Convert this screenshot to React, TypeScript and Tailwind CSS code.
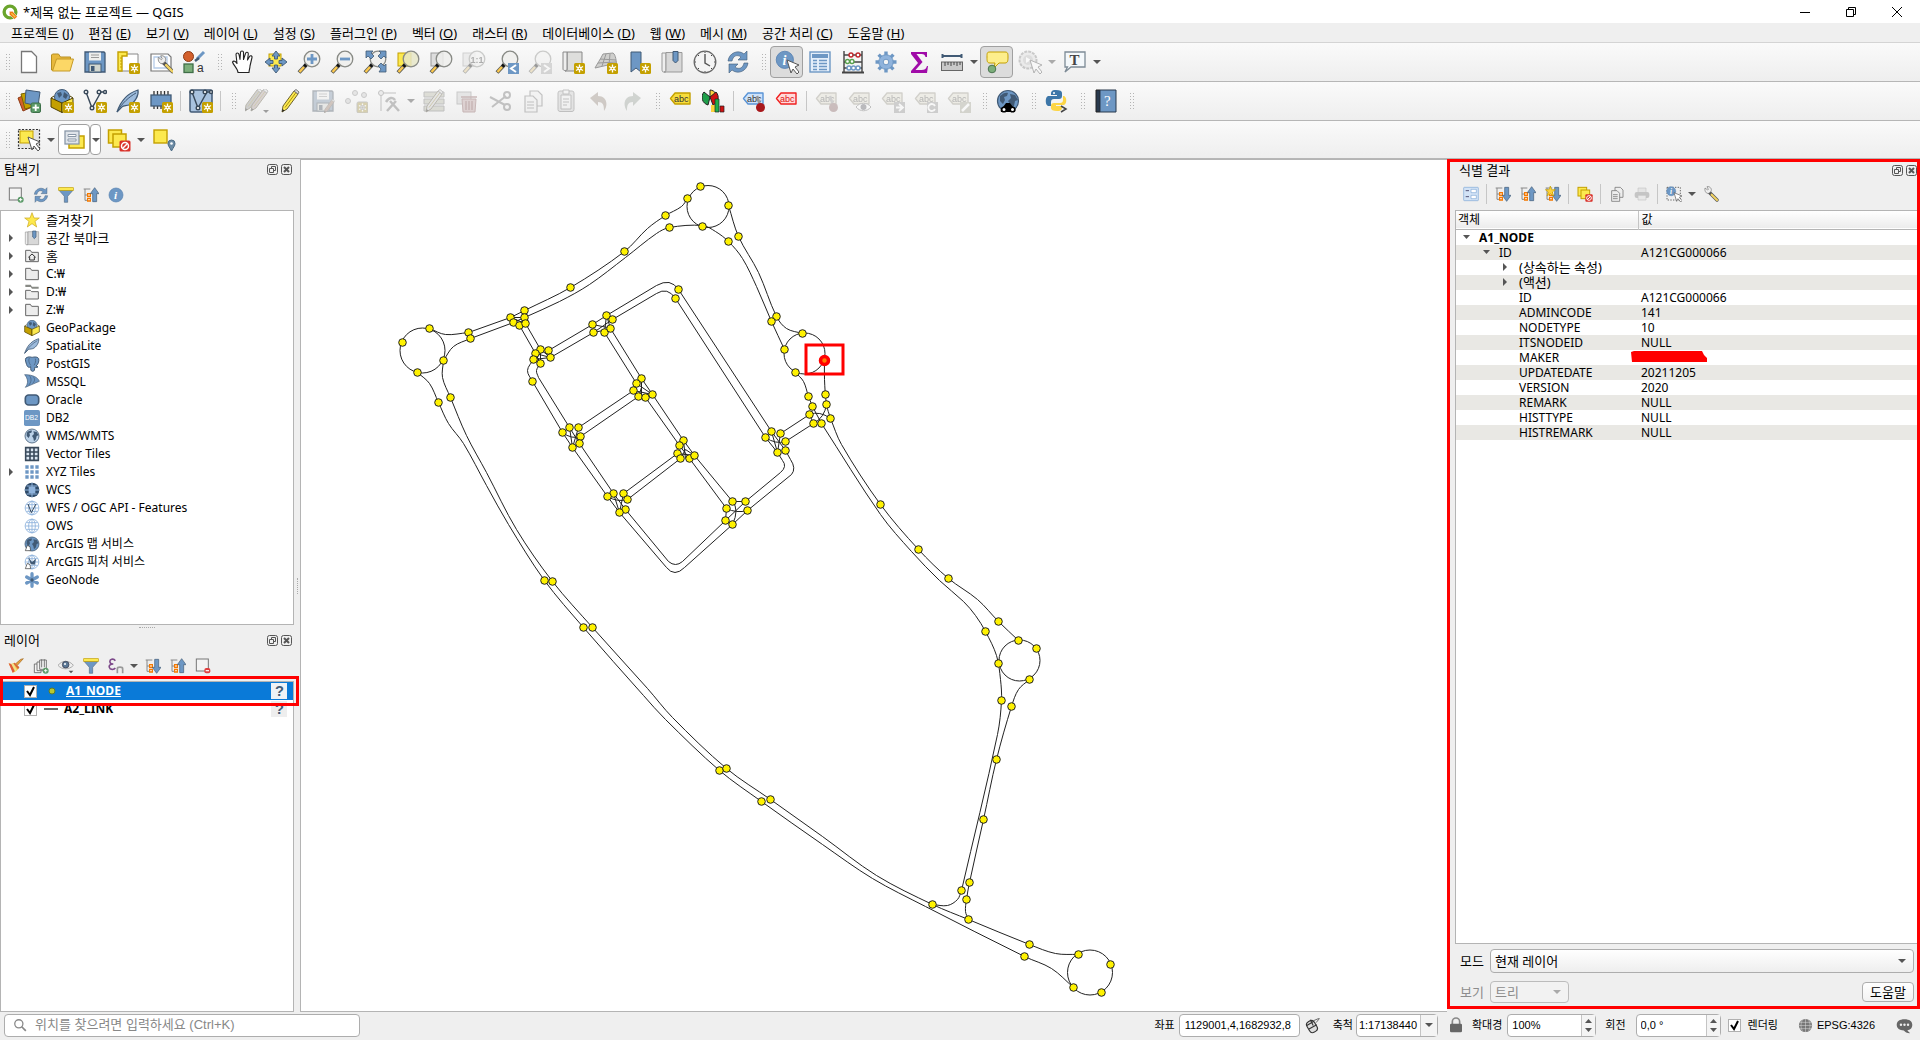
import React, { type ReactNode } from "react";

const BLUE = "#6d97c4";
const DARK = "#415a75";
const YEL = "#fce94f";
const GOLD = "#c4a000";

/* ---------- shared icon parts ---------- */

const Badge = () => (
  <g>
    <rect x="13" y="13" width="11" height="11" rx="1.5" fill={GOLD} />
    <path d="M18.5 14.5v8M15 16.5l7 4M22 16.5l-7 4" stroke="#fff" strokeWidth="1.3" />
    <circle cx="18.5" cy="18.5" r="2" fill="#fff" />
    <circle cx="18.5" cy="18.5" r=".8" fill={GOLD} />
  </g>
);

const Lens = ({ children, fill = "#eeeeec" }: { children?: ReactNode; fill?: string }) => (
  <g>
    <path d="M9.5 14.5L2 22.5" stroke="#555753" strokeWidth="4" />
    <path d="M7 17L2.5 22" stroke="#fcc94f" strokeWidth="2.4" />
    <path d="M10 13.5l-2.5 3" stroke="#111" strokeWidth="3.5" />
    <circle cx="15" cy="9" r="7.8" fill={fill} fillOpacity=".85" stroke="#888a85" strokeWidth="1.3" />
    {children}
  </g>
);

const Globe = ({ dark = false }: { dark?: boolean }) => (
  <g>
    <circle cx="12" cy="12" r="10.5" fill={dark ? BLUE : "#bcd2e8"} stroke={DARK} strokeWidth="1.2" />
    <path d="M4 7c3-3 6-4 8-3l-1 3-3 1 1 3-2 4-3-3zM14 5l5 1 3 5-3 1-1 5-3 3-1-5-2-3 3-3z" fill={DARK} />
  </g>
);

const Grid = ({ fill, stroke }: { fill: string; stroke: string }) => (
  <g fill="none" stroke={stroke} strokeWidth="1.3">
    <circle cx="12" cy="12" r="10.3" fill={fill} />
    <ellipse cx="12" cy="12" rx="5" ry="10.3" />
    <path d="M12 2v20M2 12h20M3.500 7h17M3.500 17h17" />
  </g>
);

const Tag = ({ fill = "#e6dfc0", stroke = "#a09a80", color = "#555" }: { fill?: string; stroke?: string; color?: string }) => (
  <g>
    <path d="M1.500 9.500L6 4h15v11H6z" fill={fill} stroke={stroke} strokeWidth="1.4" strokeLinejoin="round" />
    <text x="5" y="12.500" fontSize="9" fontFamily="Liberation Sans" fill={color}>abc</text>
  </g>
);

const Doc = () => <path d="M4.500 1.500h10l5 5v16h-15z" fill="#fff" stroke="#777" strokeWidth="1.3" />;

const Box = () => (
  <g>
    <circle cx="12" cy="8" r="7.500" fill={BLUE} stroke={DARK} />
    <path d="M7 4l4-1 1 3-3 3zM14 3l4 3-2 4-3-2z" fill={DARK} />
    <path d="M1 9l11 5v9.500L1 18z" fill={GOLD} stroke="#4d3f00" strokeLinejoin="round" />
    <path d="M23 9l-11 5v9.500L23 18z" fill={YEL} stroke="#4d3f00" strokeLinejoin="round" />
    <path d="M1 9l3-2M23 9l-3-2" stroke="#4d3f00" />
  </g>
);

const Feather = () => (
  <g>
    <path d="M1 23C4 14 9 5 22 1c1 5-3 13-9 15-3 1-6 0-7 2z" fill="#9dbbdc" stroke={DARK} strokeWidth="1.2" />
    <path d="M1 23C6 14 13 8 20 4" stroke={DARK} fill="none" />
  </g>
);

const Pointer = ({ x = 10, y = 9 }: { x?: number; y?: number }) => (
  <path transform={`translate(${x} ${y})`} d="M1 1l12 5-4 2 4 5-2 2-4-5-2 4z" fill="#fff" stroke="#555" strokeLinejoin="round" />
);

const Refresh = () => (
  <g fill={BLUE} stroke={DARK} strokeWidth=".6">
    <path d="M2 11C3 3 12-1 18 4l3-3v9h-9l3-3c-4-3-8-1-9 4z" />
    <path d="M22 13c-1 8-10 12-16 7l-3 3v-9h9l-3 3c4 3 8 1 9-4z" />
  </g>
);

const NoSign = ({ cx = 18, cy = 18 }: { cx?: number; cy?: number }) => (
  <g>
    <rect x={cx - 5.5} y={cy - 5.5} width="11" height="11" rx="1.500" fill="#d9322b" />
    <circle cx={cx} cy={cy} r="3.500" fill="none" stroke="#fff" strokeWidth="1.500" />
    <path d={`M${cx - 2.5} ${cy + 2.5}l5-5`} stroke="#fff" strokeWidth="1.500" />
  </g>
);

const Wrench = () => (
  <g>
    <path d="M9 9l12 12" stroke="#555" strokeWidth="5" strokeLinecap="round" />
    <path d="M13 13l8 8" stroke="#f0d264" strokeWidth="3.200" strokeLinecap="round" />
    <path d="M3 3l4 3 1-1-2-4c4-1 8 3 6 7l-3 3C5 12 2 8 3 3z" fill="#eee" stroke="#777" />
  </g>
);

const Pencil = ({ fill = YEL }: { fill?: string }) => (
  <g>
    <path d="M5 17L16 2l4 3L9 20l-5 3z" fill={fill} stroke="#6b6030" strokeLinejoin="round" />
    <path d="M7 18.500L18 3.500" stroke="#a89010" />
    <path d="M16 2l4 3 1-2-3-2.500z" fill="#ddd" stroke="#777" />
    <path d="M4 23l.5-3 2 1.500z" fill="#222" />
  </g>
);

const Floppy = () => (
  <g>
    <path d="M2 2h19l1 1v19H2z" fill={BLUE} stroke={DARK} strokeWidth="1.300" />
    <rect x="6" y="2.500" width="12" height="8" fill="#eeeeec" />
    <path d="M8 5h8M8 7.500h8" stroke="#999" />
    <rect x="6" y="14" width="12" height="8" fill="#d3d7cf" stroke={DARK} />
    <rect x="8" y="16" width="3.500" height="5" fill={DARK} />
  </g>
);

const Funnel = () => (
  <g>
    <path d="M1.500 5h21l-8 9v9h-5v-9z" fill={BLUE} stroke={DARK} strokeWidth=".8" />
    <rect x="1" y="1" width="22" height="4" fill={YEL} stroke={GOLD} />
  </g>
);

const Tree = ({ up = false }: { up?: boolean }) => (
  <g>
    <path d="M1 3h10M3 3v17h5M3 12h5" stroke="#888" fill="none" strokeWidth="1.500" />
    <path d="M7 10h4v4H7zM7 17h4v4H7z" fill="#fff" stroke="#f57900" strokeWidth="2" />
    {up ? (
      <path d="M14.500 22V10H11l6.500-9L24 10h-3.500v12z" fill={BLUE} stroke={DARK} />
    ) : (
      <path d="M14.500 2v12H11l6.500 9 6.500-9h-3.500V2z" fill={BLUE} stroke={DARK} />
    )}
  </g>
);

const Info = () => (
  <g>
    <circle cx="12" cy="12" r="10.500" fill={BLUE} stroke="#5580b0" />
    <text x="9" y="18" fontSize="17" fontStyle="italic" fontWeight="bold" fontFamily="Liberation Serif" fill="#fff">i</text>
  </g>
);

const Folder = () => <path d="M2.500 3.500h7l2 3h10v14h-19z" fill="#ededed" stroke="#666" strokeWidth="1.500" strokeLinejoin="round" />;

const Book = () => (
  <g>
    <path d="M2 3h4v19H3.500C2 22 2 20 2 19z" fill="#eee" stroke="#999" />
    <path d="M6 2.500h16v19.500H4c2 0 2-1 2-3z" fill="#d8d8d8" stroke="#999" />
    <path d="M13 1.500h5v9l-2.500 2.500L13 10.500z" fill={BLUE} stroke={DARK} />
  </g>
);

const SqueezeV = () => (
  <g fill="#fff" stroke="#39495a" strokeWidth="1.400">
    <path d="M3 3l6 16L18 3h4" fill="none" />
    <circle cx="3" cy="3" r="1.800" /><circle cx="16" cy="3" r="1.800" /><circle cx="22" cy="3" r="1.500" /><circle cx="9" cy="19" r="1.800" />
  </g>
);

/* ---------- icon set, drawn on a 24 x 24 field ---------- */

const icons: Record<string, ReactNode> = {
  qgis: (
    <g>
      <circle cx="12" cy="12" r="8.800" fill="none" stroke="#6aa52c" strokeWidth="5" />
      <path d="M11 11h5l7 8-4 4-8-7z" fill="#ee7913" stroke="#fff" strokeWidth=".8" />
      <path d="M14 14l6 6" stroke="#f6c445" strokeWidth="2" />
    </g>
  ),
  doc: <Doc />,
  open: <g><path d="M1.500 5V20h2l3-9h14V7h-10l-2-3h-6z" fill="#e8b93c" stroke="#b78f22" /><path d="M2.500 21l4-12H23.500l-3.500 12z" fill="#fcd766" stroke="#c59a28" /></g>,
  save: <Floppy />,
  layout: <g><path d="M3 4h19v17H3z" fill="#fff" stroke="#888" /><path d="M2 2h9v4H6v15H2z" fill={YEL} stroke={GOLD} strokeWidth="1.400" /><path d="M4 8h2M4 11h2M4 14h2M4 17h2" stroke={GOLD} /><Badge /></g>,
  manager: <g><path d="M2 4h17l3 3v14H2z" fill="#fff" stroke="#777" strokeWidth="1.200" /><path d="M5 7h13v11H5z" fill="none" stroke="#b5cbe8" strokeWidth="1.300" /><g transform="translate(7 5) scale(.78)"><Wrench /></g></g>,
  style: <g><circle cx="6.500" cy="6.500" r="5" fill="#d3602c" stroke="#8d3a15" /><rect x="2" y="14" width="9" height="8.500" fill="#7cae7a" stroke="#3f6e48" strokeWidth="1.300" /><path d="M15 9l7-7" stroke={BLUE} strokeWidth="3" /><path d="M13 11l4-3" stroke={DARK} strokeWidth="2.500" /><text x="15" y="22" fontSize="12" fontFamily="Liberation Sans" fill="#333">a</text></g>,
  pan: <path d="M7 22.500c0-4-4.500-7-5.500-10.500 1-1.500 3-1 4.500 1.500L5 4.500c0-2 2.500-2 3 0l1 5 .5-7c0-2 3-2 3 0v7l2-6c.5-2 3-1.500 2.800.5L16.500 10l2-3.500c1-1.500 3-.5 2.500 1L19 16c0 2.500-1 4-1 6.500z" fill="#fff" stroke="#222" strokeWidth="1.100" strokeLinejoin="round" />,
  panSel: <g><rect x="5" y="4" width="12" height="12" fill={YEL} stroke={GOLD} /><path d="M12 1l4 5h-2.500v3h-3V6H8zM12 23l4-5h-2.500v-3h-3v3H8zM1 12l5-4v2.500h3v3H6V16zM23 12l-5-4v2.500h-3v3h3V16z" fill={BLUE} stroke={DARK} strokeWidth=".9" /></g>,
  zoomIn: <Lens><path d="M15 4v10M10 9h10" stroke={BLUE} strokeWidth="2.800" /></Lens>,
  zoomOut: <Lens><path d="M10 9h10" stroke={BLUE} strokeWidth="2.800" /></Lens>,
  zoomFull: <g><Lens /><g fill={BLUE} stroke={DARK} strokeWidth=".8"><path d="M3 1h7L8 3l3 3-3 3-3-3-2 2z" /><path d="M23 1v7l-2-2-3 3-3-3 3-3-2-2z" /><path d="M23 22v-8l-2 2-3-3-3 3 3 3-2 3z" /></g></g>,
  zoomSel: <g><rect x="2" y="3" width="13" height="13" fill={YEL} stroke={GOLD} /><Lens fill="#e6e6c8" /></g>,
  zoomLayer: <g><rect x="2" y="3" width="12" height="13" fill="#ddd" stroke="#999" /><Lens /></g>,
  zoomNative: <g><rect x="1" y="3" width="12" height="13" fill="#ddd" stroke="#999" /><Lens><text x="8.500" y="12.500" fontSize="9" fontWeight="bold" fontFamily="Liberation Sans" fill="#444">1:1</text></Lens></g>,
  zoomLast: <g><Lens /><rect x="13" y="13" width="11" height="11" fill={BLUE} /><path d="M21 15l-5 3.500 5 3.500" stroke="#fff" strokeWidth="2" fill="none" /></g>,
  zoomNext: <g><Lens /><rect x="13" y="13" width="11" height="11" fill="#aaa" /><path d="M16 15l5 3.500-5 3.500" stroke="#fff" strokeWidth="2" fill="none" /></g>,
  newMap: <g><path d="M6 2h15v19H4c3 0 2-3 2-3z" fill="#dededc" stroke="#888" /><path d="M2 2h4v17c0 2-4 2-4 0z" fill="#eee" stroke="#888" /><Badge /></g>,
  new3d: <g><path d="M9 4l10-1c3 2 3 8 4 13l-9-1-13 3C3 14 6 10 9 4z" fill="#cfcfcd" stroke="#999" /><path d="M6 9l16 1M4 13l18-1M12 4L8 16M16 4l-1 11" stroke="#999" fill="none" /><Badge /></g>,
  newBookmark: <g><path d="M4 2h10v20l-5-4-5 4z" fill={BLUE} stroke={DARK} /><Badge /></g>,
  bookmarks: <Book />,
  clock: <g><circle cx="12" cy="12" r="10.800" fill="#f4f4f4" stroke="#666" strokeWidth="1.300" /><path d="M12 4v9l5 3" fill="none" stroke="#555" strokeWidth="1.400" /><path d="M12 2v1M22 12h-1M12 22v-1M2 12h1M5 5l1 1M19 5l-1 1M5 19l1-1M19 19l-1-1" stroke="#444" /></g>,
  refresh: <Refresh />,
  identify: <g><g transform="scale(.82)"><Info /></g><Pointer x={11} y={9} /></g>,
  table: <g><rect x="2" y="2" width="20" height="20" fill="#e4eefa" stroke={BLUE} strokeWidth="1.400" /><rect x="4" y="4" width="16" height="4" fill={BLUE} /><path d="M5 10.500h4M11 10.500h8M5 13.500h4M11 13.500h8M5 16.500h4M11 16.500h8M5 19.500h4M11 19.500h8" stroke={BLUE} strokeWidth="1.300" /></g>,
  abacus: <g fill="#fff" strokeWidth="1.400"><path d="M3 1v21M21 1v21M3 5h18M3 12h18M3 18h18" stroke="#444" fill="none" /><path d="M1 22.500h22" stroke="#444" strokeWidth="2" /><g stroke="#c0282c"><circle cx="10" cy="5" r="2" /><circle cx="17" cy="5" r="2" /></g><g stroke="#59a14f"><circle cx="6.500" cy="11.500" r="2" /><circle cx="11" cy="11.500" r="2" /></g><g stroke={BLUE}><circle cx="8" cy="18" r="2" /><circle cx="12.500" cy="18" r="2" /><circle cx="17" cy="18" r="2" /></g></g>,
  gear: <g><path d="M12 1.500v21M1.500 12h21M4.600 4.600l14.800 14.800M19.400 4.600L4.600 19.400" stroke={BLUE} strokeWidth="3.400" /><circle cx="12" cy="12" r="7.200" fill="#8fb3dc" stroke={BLUE} /><circle cx="12" cy="12" r="2.800" fill="#f5f5f5" stroke={BLUE} /></g>,
  sigma: <path d="M4 2h16v5h-1.500c-.5-2-1.500-3-4-3H9.500l6 8-7 8h6c3 0 4.500-1 5.500-4H21l-1 7H4v-2l7-8-7-9z" fill="#a00ba8" />,
  ruler: <g><path d="M2 6h20M2.500 4v4M21.500 4v4" stroke={DARK} strokeWidth="2" /><rect x="1.500" y="12" width="21" height="8.500" fill="#c9c9c9" stroke="#666" /><path d="M5 12v4M8 12v3M11 12v4M14 12v3M17 12v4M20 12v3" stroke="#444" /></g>,
  tip: <g><path d="M5 2h15c3 0 3 2 3 5s0 6-3 6h-6l-5 5 1-5H5c-3 0-3-2-3-6s0-5 3-5z" fill="#fdee8c" stroke={GOLD} /><circle cx="7" cy="19" r="3.800" fill="#7cae7a" stroke="#4b7350" /></g>,
  action: <g><circle cx="10" cy="10" r="8.500" fill="#ddd" stroke="#888" strokeWidth="2" strokeDasharray="3 1" /><circle cx="10" cy="10" r="5" fill="#bbb" /><path d="M8 7l5 3-5 3z" fill="#fff" /><Pointer x={11} y={9} /></g>,
  text: <g><path d="M2 2h20v15H8l-6 5 2.500-5H2z" fill="#f4f8fb" stroke="#7d8b96" strokeWidth="1.300" /><text x="6.500" y="14.500" fontSize="15" fontWeight="bold" fontFamily="Liberation Serif" fill="#444">T</text></g>,

  dataSource: <g><path d="M1 9l9-4 5 13-9 4z" fill="#d3602c" stroke="#8d3a15" /><path d="M4 5l10-2 4 14-10 3z" fill={GOLD} stroke="#7a6400" /><path d="M9 1l14 2-2 14L8 14z" fill={BLUE} stroke={DARK} /><rect x="14" y="14" width="9.500" height="9.500" rx="1.500" fill="#5b9a68" stroke="#3d7049" /><path d="M18.700 15.500v6.500M15.500 18.700h6.500" stroke="#fff" strokeWidth="1.800" /></g>,
  geopackageNew: <g><Box /><Badge /></g>,
  shapeNew: <g><SqueezeV /><Badge /></g>,
  spatialiteNew: <g><Feather /><Badge /></g>,
  memory: <g><path d="M5 2v18M8.500 2v18M12 2v18M15.500 2v18M19 2v18" stroke="#333" strokeWidth="1.300" /><rect x="2" y="6" width="20" height="11" fill={BLUE} stroke={DARK} strokeWidth="1.300" /><Badge /></g>,
  virtual: <g><rect x="1" y="1" width="22" height="22" rx="1.500" fill="#a8c2df" stroke={DARK} strokeWidth="1.500" /><SqueezeV /><Badge /></g>,
  edits: <g><g transform="translate(-4 -1)"><Pencil fill="#999" /></g><g transform="translate(2 -1)"><Pencil fill="#b99" /></g><path d="M18 21h6l-3 3z" fill="#222" /></g>,
  pencil: <Pencil />,
  saveEdits: <g><Floppy /><g transform="translate(11 10) scale(.6)"><Pencil fill="#b77" /></g></g>,
  addPoint: <g fill="#ccc" stroke="#888"><circle cx="4" cy="12" r="2.500" /><circle cx="11" cy="4" r="2.500" /><circle cx="20" cy="6" r="2.500" /><Badge /></g>,
  vertex: <g><path d="M4 22V4h15" fill="none" stroke="#777" /><circle cx="4" cy="4" r="2.500" fill="#ddd" stroke="#777" /><path d="M10 22l9-10M9 13c3-5 7-5 9-2M13 12l9 10" stroke="#777" strokeWidth="2.500" fill="none" /></g>,
  multiEdit: <g><path d="M2 3h20v5H2zM2 10h20v5H2zM2 17h20v5H2z" fill="#b8bb99" stroke="#777" /><Pencil fill="#ccc" /></g>,
  trash: <g><rect x="2" y="3" width="14" height="12" fill="#ccc" stroke="#888" /><path d="M7 10h14l-1 13H8z" fill="#d49a9a" stroke="#a55" /><path d="M6 8h16M11 12v9M14 12v9M17 12v9" stroke="#a55" strokeWidth="1.500" /></g>,
  cut: <g fill="none" stroke="#777" strokeWidth="2"><path d="M2 8l15 8M4 18L18 7" /><circle cx="19" cy="6" r="3" /><circle cx="19" cy="18" r="3" /></g>,
  copy: <g fill="#eee" stroke="#777" strokeWidth="1.200"><path d="M9 2h8l4 4v11H9z" /><path d="M4 7h8l4 4v12H4z" /><path d="M6 13h7M6 16h7M6 19h7" /></g>,
  paste: <g fill="#eee" stroke="#777"><rect x="4" y="2" width="16" height="20.500" rx="2" fill="#ccc" /><path d="M7 6h10v14H7z" /><path d="M9 1h6v4H9zM9 10h6M9 13h6M9 16h4" /></g>,
  undo: <path d="M3 9l8-6v4c8 0 11 8 6 15 0-6-1-9-6-9v4z" fill="#a58b75" />,
  redo: <path d="M21 9l-8-6v4C5 7 2 15 7 22c0-6 1-9 6-9v4z" fill="#95a595" />,
  labelYellow: <Tag fill="#f7dd3c" stroke={GOLD} color="#333" />,
  diagram: <g><path d="M8 8V1a7 7 0 0 1 6 10z" fill="#fcd23c" stroke="#222" /><path d="M8 8L2 3a8 8 0 0 0 4 13z" fill="#1e9e4a" stroke="#222" /><path d="M8 8l6-5a8 8 0 0 1-3 13z" fill="#cf1111" stroke="#222" /><path d="M9 16h4v7H9z" fill="#fcd23c" /><path d="M13 10h4v13h-4z" fill="#1eae4a" stroke="#222" strokeWidth=".7" /><path d="M18 17h4v6h-4z" fill="#cf1111" stroke="#222" strokeWidth=".7" /></g>,
  labelPin: <g><Tag fill="#cfe3fa" stroke="#5a94d6" color="#333" /><path d="M15 7l3 9" stroke="#999" strokeWidth="2.500" /><circle cx="18.500" cy="18.500" r="4.500" fill="#a8181c" /></g>,
  labelRed: <Tag fill="#ffdada" stroke="#f02020" color="#e01010" />,
  labelPinOff: <g><Tag /><path d="M15 7l3 9" stroke="#999" strokeWidth="2.500" /><circle cx="18.500" cy="18.500" r="4.500" fill="#a66" /></g>,
  labelEye: <g><Tag /><path d="M8 18c4-5 11-5 15 0-4 5-11 5-15 0z" fill="#fff" stroke="#777" /><circle cx="15.500" cy="18" r="3" fill="#667" /></g>,
  labelMove: <g><Tag /><rect x="13" y="13" width="11" height="11" fill="#999" /><path d="M15 18.500h6M18 15l4 3.500-4 3.500" stroke="#fff" strokeWidth="1.800" fill="none" /></g>,
  labelRotate: <g><Tag /><rect x="13" y="13" width="11" height="11" fill="#999" /><path d="M21 20a3.500 3.500 0 1 1 0-3" stroke="#fff" strokeWidth="1.800" fill="none" /></g>,
  labelEdit: <g><Tag /><rect x="13" y="13" width="11" height="11" fill="#a9a98a" /><path d="M15 22l7-7" stroke="#fff" strokeWidth="2.500" /></g>,
  metasearch: <g><Globe dark /><path d="M5 23a4 4 0 0 1 2-5l3-4h4l3 4a4 4 0 0 1 2 5z" fill="#000" /><circle cx="8" cy="20.500" r="2.300" fill="#fff" stroke="#000" strokeWidth="1.600" /><circle cx="16.500" cy="20.500" r="2.300" fill="#fff" stroke="#000" strokeWidth="1.600" /></g>,
  python: <g><path d="M11 1c-5 0-5 2-5 5h6v1H3c-3 1-3 9 0 10h3v-4c0-2 1-3 3-3h5c2 0 3-1 3-3V4c0-2-2-3-6-3z" fill="#3d76a8" /><path d="M12 22c5 0 5-2 5-5h-6v-1h8c3-1 3-8 0-9h-1v4c0 2-1 3-3 3H9c-2 0-3 1-3 3v2c0 2 2 3 6 3z" fill="#fcd545" /><circle cx="9" cy="4" r="1" fill="#fff" /><path d="M16 17l5 3-5 3" fill="none" stroke="#444" strokeWidth="1.500" /></g>,
  help: <g><path d="M2 1h4v22H2z" fill="#28394d" stroke="#222" /><path d="M6 1h16v22H6z" fill={BLUE} stroke="#28394d" /><text x="10" y="17" fontSize="15" fontFamily="Liberation Serif" fill="#fff">?</text></g>,

  select: <g><rect x="1.500" y="1.500" width="21" height="19" fill="#e4e4e4" stroke="#333" strokeDasharray="2 1.500" strokeWidth="1.200" /><rect x="3" y="3" width="13" height="12" fill={YEL} stroke={GOLD} /><Pointer x={10} y={8} /></g>,
  form: <g><rect x="7" y="8" width="15" height="12" fill={YEL} stroke={GOLD} strokeWidth="1.500" /><rect x="3" y="3" width="14" height="13" fill="#dfe4ea" stroke="#8a98a8" strokeWidth="1.300" /><path d="M6 6.500h8v2H6zM6 11h8v2H6z" fill="#fff" stroke="#8a98a8" /></g>,
  deselect: <g><rect x="1.500" y="2" width="13" height="13" fill={YEL} stroke={GOLD} strokeWidth="1.500" /><rect x="6" y="6" width="13" height="13" fill={YEL} stroke={GOLD} strokeWidth="1.500" /><NoSign /></g>,
  location: <g><rect x="2" y="2" width="13" height="13" fill={YEL} stroke={GOLD} strokeWidth="1.400" /><path d="M19.500 23c-2-4-3.500-5-3.500-7.500a3.500 3.500 0 0 1 7 0c0 2.500-1.500 3.500-3.500 7.500z" fill="#6c8ba5" stroke="#4a6a85" /><circle cx="19.500" cy="15.500" r="1.300" fill="#fff" /></g>,

  addLayer: <g><rect x="2" y="1.500" width="18" height="18" fill="#f4f4f4" stroke="#777" strokeWidth="1.500" /><circle cx="19" cy="19" r="4.500" fill="#5b9a68" /><path d="M19 16.500v5M16.500 19h5" stroke="#fff" strokeWidth="1.500" /></g>,
  filter: <Funnel />,
  collapse: <Tree up />,
  expand: <Tree />,
  info: <Info />,
  star: <path d="M12 1l3 8h8l-6.500 5 2.500 8.500L12 17.500 5 22.500 7.500 14 1 9h8z" fill="#fde94c" stroke="#c9a51a" strokeLinejoin="round" />,
  bookmark: <Book />,
  home: <g><Folder /><path d="M6.500 14l5.500-5 5.500 5M8.500 13v5h7v-5" fill="none" stroke="#333" strokeWidth="1.500" /></g>,
  folder: <Folder />,
  drive: <g><path d="M2 1h8l2 3h10v3H12L10 4.500H2z" fill="#888a85" /><path d="M2.500 9.500h7l2 2h10v11h-19z" fill="#ededed" stroke="#666" strokeWidth="1.500" /></g>,
  geopackage: <Box />,
  spatialite: <Feather />,
  postgis: <g><path d="M3 3c4-3 8-1 9-1s8-2 10 2c1 4-1 9-4 11l3 1c-1 2-4 1-5 1 0 3 0 6-3 6s-3-3-3-7c-2 2-5 1-6-3C3 10 1 5 3 3z" fill={BLUE} stroke={DARK} strokeWidth="1.500" /><path d="M8 3c-2 4 0 8 2 11M17 4c1 4 0 7-2 10" fill="none" stroke={DARK} /></g>,
  mssql: <g><path d="M1 1c12 0 20 4 22 10L2 20c5-6 4-13-1-19z" fill={BLUE} stroke={DARK} /><path d="M8 2c4 5 3 10-1 15M14 4c3 4 2 7-1 10" fill="none" stroke={DARK} /></g>,
  oracle: <rect x="2" y="4.500" width="20" height="15" rx="5" fill={BLUE} stroke={DARK} strokeWidth="2.500" />,
  db2: <g><rect width="24" height="24" rx="2.500" fill={BLUE} /><text x="1.500" y="15.500" fontSize="10" fontFamily="Liberation Sans" fill="#fff">DB2</text></g>,
  wms: <Globe />,
  vtiles: <g><rect x="2" y="2" width="20" height="20" fill="#dbe6f2" /><path d="M2.500 2.500h19v19h-19zM9 2v20M15 2v20M2 9h20M2 15h20" fill="none" stroke="#39495a" strokeWidth="2.400" /></g>,
  xyz: <path d="M2 2h5v5H2zM9.500 2h5v5h-5zM17 2h5v5h-5zM2 9.500h5v5H2zM9.500 9.500h5v5h-5zM17 9.500h5v5h-5zM2 17h5v5H2zM9.500 17h5v5h-5zM17 17h5v5h-5z" fill={BLUE} />,
  wcs: <g><circle cx="12" cy="12" r="11" fill="#2f4a68" /><path d="M7 7h10v10H7z" fill="#8fb3dc" /><path d="M1 12h22M4 6h16M4 18h16M12 1v22" stroke="#8fb3dc" strokeWidth="1.500" /></g>,
  wfs: <g><Grid fill="#fff" stroke="#8fb3dc" /><path d="M6 6l5 13 7-13" fill="none" stroke="#39495a" strokeWidth="1.500" /></g>,
  ows: <Grid fill="#fff" stroke="#8fb3dc" />,
  arcgisMap: <g><Globe dark /><path d="M2 22l3-8 4 2 1 6z" fill="#fff" stroke="#333" /></g>,
  arcgisFeature: <g><Grid fill="#fff" stroke="#8fb3dc" /><path d="M6 4l6 8 6-5-2 9-6-1z" fill={DARK} /><path d="M2 22l3-8 4 2 1 6z" fill="#fff" stroke="#333" /></g>,
  geonode: <g><path d="M12 2.500v19M4 7.500l16 9M20 7.500l-16 9" stroke={BLUE} strokeWidth="5" strokeLinecap="round" /><circle cx="12" cy="12" r="2.500" fill={DARK} /></g>,

  brush: <g><path d="M23 1L14 11l-3-2 8-7z" fill="#e8a040" stroke="#a06a20" /><path d="M1 8c4 2 6 0 9-1l7 7c-3 5-6 7-10 8-1-5-4-9-6-14z" fill="#f2c94c" /><path d="M1 8c2 5 4 9 6 14l3-2-5-11z" fill="#e05a3a" /><path d="M5 9l6 11 2-2-5-10z" fill="#f0e090" /><path d="M10 7l7 7-2 3-7-9z" fill="#d9653b" /></g>,
  addGroup: <g fill="#f4f4f4" stroke="#666" strokeWidth="1.300"><path d="M2 9h10v13H2z" /><path d="M6 6h10v13H6z" /><path d="M10 3h10v14H10z" /><path d="M13 2v12M17 2v12" /><circle cx="19" cy="19" r="4.500" fill="#5b9a68" stroke="none" /><path d="M19 16.500v5M16.500 19h5" stroke="#fff" /></g>,
  eye: <g><path d="M0 11c6-8 17-8 23 0-6 7-17 7-23 0z" fill="#eee" stroke="#888" /><circle cx="11.500" cy="10" r="5" fill="#5b7896" stroke="#334" /><circle cx="10.500" cy="9" r="1.500" fill="#fff" /><path d="M16 19h7l-3.500 4z" fill="#555" /></g>,
  epsilon: <g><path d="M11 4C8 0 2 2 3 6c0 2 3 3 5 3-4 0-7 2-6 5 1 4 7 4 9 1" fill="none" stroke="#7d4a8a" strokeWidth="2.400" /><path d="M14 23v-7c0-3 8-3 8 0v7" fill="none" stroke="#999" strokeWidth="2.500" /></g>,
  removeLayer: <g><rect x="2" y="1.500" width="18" height="18" fill="#f4f4f4" stroke="#777" strokeWidth="1.500" /><rect x="14" y="15" width="9" height="8" rx="3" fill="#e04040" /><path d="M16 19h5" stroke="#fff" strokeWidth="1.800" /></g>,

  formView: <g><rect x="1" y="2" width="22" height="20" rx="1" fill="#d3e3f6" stroke="#7fa8d6" /><path d="M4 7h5M4 16h5" stroke="#557" strokeWidth="1.500" /><path d="M12 5h8v5h-8zM12 14h8v5h-8z" fill="#fff" stroke="#7fa8d6" /></g>,
  expandNew: <g><Tree /><path d="M8 0l2 5.500h5.500L11 9l2 6-5-3.500L3 15l2-6L.5 5.500H6z" fill="#fcd23c" stroke={GOLD} /></g>,
  print: <g><path d="M6 3h12v7H6z" fill="#ddd" stroke="#aaa" /><rect x="1" y="9" width="22" height="9" rx="3" fill="#aaa" /><path d="M6 14h12v7H6z" fill="#e4e4e4" stroke="#aaa" /></g>,
  identifySel: <g><rect x="1.500" y="2" width="20" height="19" fill="none" stroke="#555" strokeDasharray="2 2" strokeWidth="1.300" /><g transform="scale(.65)"><Info /></g><Pointer x={11} y={9} /></g>,
  wrench: <Wrench />,
  question: <text x="6" y="20" fontSize="22" fontWeight="bold" fontFamily="Liberation Sans" fill={DARK}>?</text>,
  mouse: <g><rect x="5" y="5" width="12" height="17" rx="5" fill="#ddd" stroke="#333" strokeWidth="1.600" transform="rotate(-30 11 13)" /><path d="M4 12l10-6M7 17l11-6M9 4l4 8" stroke="#333" strokeWidth="1.500" /><path d="M14 5l7-3M17 8l5-6" stroke="#333" /></g>,
  lock: <g><path d="M6.500 11V7a5.500 5.500 0 0 1 11 0v4" fill="none" stroke="#888" strokeWidth="2.500" /><rect x="3" y="10" width="18" height="13" rx="2" fill="#666" /></g>,
  crs: <g><circle cx="12" cy="12" r="10.500" fill="#777" /><path d="M1 12h22M3 7h18M3 17h18M12 1v22M7 3c-3 6-3 12 0 18M17 3c3 6 3 12 0 18" fill="none" stroke="#ddd" strokeWidth=".8" /></g>,
  bubble: <g><path d="M12 3c7 0 11 3 11 8s-3 7-7 8l4 4c-5 0-7-2-9-4C5 19 1 16 1 11s4-8 11-8z" fill="#666" /><circle cx="7" cy="11" r="1.700" fill="#eee" /><circle cx="12" cy="11" r="1.700" fill="#eee" /><circle cx="17" cy="11" r="1.700" fill="#eee" /></g>,
  search: <g fill="none" stroke="#888" strokeWidth="2.200"><circle cx="10" cy="10" r="7" /><path d="M15 15l7 7" strokeWidth="3" /></g>,
};

const Icon = ({ name, size = 24 }: { name: string; size?: number }) => (
  <svg width={size} height={size} viewBox="0 0 24 24" fill="none" aria-hidden="true" className="shrink-0">
    {icons[name]}
  </svg>
);

/* ---------- toolbar building blocks ---------- */

const Grip = ({ first = false }: { first?: boolean }) => (
  <div className={first ? "flex w-3 shrink-0 justify-center pl-1" : "flex w-4 shrink-0 justify-center pl-1"}>
    <svg width="5" height="18" aria-hidden="true">
      {[0, 3, 6, 9, 12, 15].map((y) => (
        <g key={y} fill="#b4b4b4"><rect y={y + 1} width="1" height="1" /><rect x="3" y={y + 1} width="1" height="1" /></g>
      ))}
    </svg>
  </div>
);

const Sep = () => <div className="flex w-[7px] shrink-0 justify-center"><div className="h-5 w-px bg-[#c6c6c6]" /></div>;

const Caret = ({ off = false }: { off?: boolean }) => (
  <svg width="8" height="4" viewBox="0 0 8 4" aria-hidden="true" className="shrink-0"><path d="M0 0h8L4 4z" fill={off ? "#aaa" : "#555"} /></svg>
);

const Arrow = ({ off = false }: { off?: boolean }) => (
  <button type="button" aria-label="옵션" className="flex h-8 w-3 shrink-0 items-center justify-center"><Caret off={off} /></button>
);

const Tool = ({ name, off = false, on = false }: { name: string; off?: boolean; on?: boolean }) => (
  <button type="button" aria-label={name} className={on ? "flex h-8 w-[33px] shrink-0 items-center justify-center rounded-sm border border-[#a0a0a0] bg-[#dcdcdc]" : "flex h-8 w-[33px] shrink-0 items-center justify-center"}>
    <span className={off ? "opacity-40 grayscale-50" : ""}><Icon name={name} /></span>
  </button>
);

/* "|" grip, "-" separator, "v" menu arrow, "!" disabled, "*" pressed */
const Strip = ({ items }: { items: string[] }) => (
  <>
    {items.map((it, i) => {
      if (it === "|") return <Grip key={i} first={i === 0} />;
      if (it === "-") return <Sep key={i} />;
      if (it === "v") return <Arrow key={i} />;
      if (it === "!v") return <Arrow key={i} off />;
      if (it[0] === "!") return <Tool key={i} name={it.slice(1)} off />;
      if (it[0] === "*") return <Tool key={i} name={it.slice(1)} on />;
      return <Tool key={i} name={it} />;
    })}
  </>
);

const rowClass = "flex h-[39px] shrink-0 items-center border-b border-[#b6b6b6] bg-linear-to-b from-[#fafafa] to-[#eeeeee]";

const mainTools = ["|", "doc", "open", "save", "layout", "manager", "style", "|", "pan", "panSel", "zoomIn", "zoomOut", "zoomFull", "zoomSel", "zoomLayer", "!zoomNative", "zoomLast", "!zoomNext", "newMap", "new3d", "newBookmark", "bookmarks", "clock", "refresh", "|", "*identify", "table", "abacus", "gear", "sigma", "ruler", "v", "*tip", "!action", "!v", "text", "v"];
const editTools = ["|", "dataSource", "geopackageNew", "shapeNew", "spatialiteNew", "memory", "-", "virtual", "-", "|", "!edits", "pencil", "!saveEdits", "!addPoint", "!vertex", "!v", "!multiEdit", "!trash", "!cut", "!copy", "!paste", "!undo", "!redo", "|", "labelYellow", "diagram", "-", "labelPin", "labelRed", "-", "!labelPinOff", "!labelEye", "!labelMove", "!labelRotate", "!labelEdit", "|", "metasearch", "|", "python", "|", "help", "|"];

const menus: [string, string][] = [["프로젝트", "J"], ["편집", "E"], ["보기", "V"], ["레이어", "L"], ["설정", "S"], ["플러그인", "P"], ["벡터", "O"], ["래스터", "R"], ["데이터베이스", "D"], ["웹", "W"], ["메시", "M"], ["공간 처리", "C"], ["도움말", "H"]];

/* Hangul labels are set one pixel larger than Latin ones */
const labelSize = (text: string) => (/^\(?[가-힣]/.test(text) ? "text-[13px]" : "text-[12px]");

/* ---------- docks ---------- */

const DockTitle = ({ title }: { title: string }) => (
  <div className="flex h-5 shrink-0 items-center justify-between pl-1 pr-[2px]">
    <h2 className="text-[13px]">{title}</h2>
    <div className="flex gap-[3px]">
      <button type="button" aria-label="분리">
        <svg width="11" height="11" viewBox="0 0 11 11" fill="none" stroke="#555"><rect x=".5" y=".5" width="10" height="10" rx="2" /><path d="M4.500 4.500v-2h4v4h-2M2.500 4.500h4v4h-4z" /></svg>
      </button>
      <button type="button" aria-label="닫기">
        <svg width="11" height="11" viewBox="0 0 11 11" fill="none" stroke="#555"><rect x=".5" y=".5" width="10" height="10" rx="2" /><path d="M3 3l5 5M8 3L3 8" strokeWidth="2" /></svg>
      </button>
    </div>
  </div>
);

const SmallTool = ({ name, off = false }: { name: string; off?: boolean }) => (
  <button type="button" aria-label={name} className={off ? "flex h-6 w-[25px] shrink-0 items-center justify-center opacity-60" : "flex h-6 w-[25px] shrink-0 items-center justify-center"}>
    <Icon name={name} size={16} />
  </button>
);

const browser: [string, string, boolean][] = [
  ["star", "즐겨찾기", false], ["bookmark", "공간 북마크", true], ["home", "홈", true], ["folder", "C:₩", true], ["drive", "D:₩", true], ["folder", "Z:₩", true],
  ["geopackage", "GeoPackage", false], ["spatialite", "SpatiaLite", false], ["postgis", "PostGIS", false], ["mssql", "MSSQL", false], ["oracle", "Oracle", false], ["db2", "DB2", false],
  ["wms", "WMS/WMTS", false], ["vtiles", "Vector Tiles", false], ["xyz", "XYZ Tiles", true], ["wcs", "WCS", false], ["wfs", "WFS / OGC API - Features", false], ["ows", "OWS", false],
  ["arcgisMap", "ArcGIS 맵 서비스", false], ["arcgisFeature", "ArcGIS 피처 서비스", false], ["geonode", "GeoNode", false],
];

const Right = () => <svg width="4" height="8" aria-hidden="true"><path d="M0 0v8l4-4z" fill="#555" /></svg>;

const Tick = ({ label, children }: { label: string; children?: ReactNode }) => (
  <label className="relative flex items-center gap-[7px]">
    <input type="checkbox" defaultChecked aria-label={label} className="peer size-[13px] shrink-0 appearance-none border border-[#b0b0b0] bg-white" />
    <svg width="13" height="13" className="pointer-events-none absolute left-0 hidden peer-checked:block" fill="none" aria-hidden="true"><path d="M3 6l3 4 4-8" stroke="#000" strokeWidth="2" /></svg>
    {children}
  </label>
);

const Browser = () => (
  <section className="flex h-[466px] shrink-0 flex-col">
    <DockTitle title="탐색기" />
    <div className="flex h-[31px] shrink-0 items-center pl-[3px]">
      {["addLayer", "refresh", "filter", "collapse", "info"].map((n) => <SmallTool key={n} name={n} />)}
    </div>
    <ul className="min-h-0 flex-1 overflow-hidden border border-[#b4b4b4] bg-white">
      {browser.map(([icon, text, open]) => (
        <li key={text} className="flex h-[18px] items-center">
          <span className="flex w-[23px] shrink-0 pl-2">{open && <Right />}</span>
          <Icon name={icon} size={16} />
          <span className={`pl-[6px] ${labelSize(text)}`}>{text}</span>
        </li>
      ))}
    </ul>
  </section>
);

const Layers = () => (
  <section className="flex min-h-0 flex-1 flex-col">
    <DockTitle title="레이어" />
    <div className="flex h-[31px] shrink-0 items-center pl-[3px]">
      {["brush", "addGroup", "eye", "filter", "epsilon"].map((n) => <SmallTool key={n} name={n} />)}
      <button type="button" aria-label="옵션" className="px-[2px]"><Caret /></button>
      {["expand", "collapse", "removeLayer"].map((n) => <SmallTool key={n} name={n} />)}
    </div>
    <ul className="relative min-h-0 flex-1 border border-[#b4b4b4] bg-white font-bold">
      <li className="flex h-[18px] items-center bg-[#0a7ad8] pl-[23px] pr-[6px] text-white">
        <Tick label="A1_NODE" />
        <svg width="16" height="16" className="ml-[6px]" aria-hidden="true"><circle cx="9" cy="8" r="3" fill="#b8c832" stroke="#5c7a2a" /></svg>
        <span className="flex-1 pl-[7px] underline">A1_NODE</span>
        <span className="flex size-4 items-center justify-center bg-[#eef2f6]"><Icon name="question" size={16} /></span>
      </li>
      <li className="flex h-[18px] items-center pl-[23px] pr-[6px]">
        <Tick label="A2_LINK" />
        <svg width="15" height="16" className="ml-[6px]" aria-hidden="true"><path d="M1 8h14" stroke="#333" strokeWidth="1.500" /></svg>
        <span className="flex-1 pl-[6px]">A2_LINK</span>
        <span className="flex size-4 items-center justify-center bg-[#eeeeee]"><Icon name="question" size={16} /></span>
      </li>
      <li aria-hidden="true" className="pointer-events-none absolute -left-px -right-[6px] -top-[6px] h-[30px] border-3 border-[#ff0000]" />
    </ul>
  </section>
);

/* level, expander, name, value */
const results: [number, string, string, string][] = [
  [0, "v", "A1_NODE", ""], [1, "v", "ID", "A121CG000066"], [2, ">", "(상속하는 속성)", ""], [2, ">", "(액션)", ""], [2, "", "ID", "A121CG000066"], [2, "", "ADMINCODE", "141"], [2, "", "NODETYPE", "10"],
  [2, "", "ITSNODEID", "NULL"], [2, "", "MAKER", "redacted"], [2, "", "UPDATEDATE", "20211205"], [2, "", "VERSION", "2020"], [2, "", "REMARK", "NULL"], [2, "", "HISTTYPE", "NULL"], [2, "", "HISTREMARK", "NULL"],
];
const indent = ["pl-[7px]", "pl-[27px]", "pl-[47px]"];

const Identify = () => (
  <aside className="mb-[3px] flex w-[473px] shrink-0 flex-col border-3 border-[#ff0000] pb-[3px] pl-[5px]">
    <div className="-mr-[2px] -mt-[2px]"><DockTitle title="식별 결과" /></div>
    <div className="mb-[2px] flex h-7 shrink-0 items-center pl-[3px]">
      <SmallTool name="formView" /><Sep />
      <SmallTool name="expand" /><SmallTool name="collapse" /><SmallTool name="expandNew" /><Sep />
      <SmallTool name="deselect" /><Sep />
      <SmallTool name="copy" /><SmallTool name="print" off /><Sep />
      <SmallTool name="identifySel" />
      <button type="button" aria-label="옵션" className="px-[2px]"><Caret /></button>
      <SmallTool name="wrench" />
    </div>
    <div className="min-h-0 flex-1 border-b border-l border-t border-[#b4b4b4] bg-white">
      <table className="w-full table-fixed border-collapse text-left leading-[15px]">
        <thead>
          <tr className="h-[18px] border-b border-[#b4b4b4] bg-linear-to-b from-white to-[#ececec] text-[12px]">
            <th className="w-[182px] border-r border-[#c4c4c4] py-0 pl-[2px] font-normal">객체</th>
            <th className="py-0 pl-[3px] font-normal">값</th>
          </tr>
        </thead>
        <tbody>
          {results.map(([level, mark, name, value], i) => (
            <tr key={i} className="h-[15px] odd:bg-white even:bg-[#e9e8e4]">
              <td className="p-0">
                <div className={`flex h-[15px] items-center ${indent[level]}`}>
                  <span className="flex w-4 shrink-0">{mark === "v" ? <svg width="7" height="4" aria-hidden="true"><path d="M0 0h7L3.500 4z" fill="#555" /></svg> : mark === ">" ? <Right /> : null}</span>
                  <span className={level === 0 ? "font-bold" : labelSize(name)}>{name}</span>
                </div>
              </td>
              <td className="h-[15px] p-0 pl-[3px]">
                {value === "redacted" ? <svg width="76" height="12" className="-ml-[10px] block" aria-hidden="true"><path d="M0 1l3-1h68l2 4 3 3v4H1z" fill="#ff0000" /></svg> : value}
              </td>
            </tr>
          ))}
        </tbody>
      </table>
    </div>
    <div className="mt-[5px] flex h-6 shrink-0 items-center gap-[6px] pl-[5px] pr-[3px] text-[13px]">
      <label htmlFor="mode" className="w-6 shrink-0">모드</label>
      <div className="relative flex flex-1 items-center">
        <select id="mode" className="h-6 w-full appearance-none rounded-sm border border-[#adadad] bg-linear-to-b from-white to-[#eeeeee] pl-1"><option>현재 레이어</option></select>
        <span className="pointer-events-none absolute right-2"><Caret /></span>
      </div>
    </div>
    <div className="mt-2 flex h-[22px] shrink-0 items-center gap-[6px] pl-[5px] pr-[3px] text-[13px]">
      <label htmlFor="view" className="w-6 shrink-0 text-[#8c8c8c]">보기</label>
      <div className="relative flex w-[79px] items-center">
        <select id="view" disabled className="h-[22px] w-full appearance-none rounded-sm border border-[#bcbcbc] bg-[#f2f2f2] pl-1 text-[#8c8c8c] opacity-100"><option>트리</option></select>
        <span className="pointer-events-none absolute right-2"><Caret off /></span>
      </div>
      <button type="button" className="ml-auto h-5 w-[52px] rounded-sm border border-[#adadad] bg-linear-to-b from-white to-[#f2f2f2] leading-4">도움말</button>
    </div>
  </aside>
);

/* ---------- map ---------- */

type P = [number, number];

const nodes: P[] = [
  [701, 187], [688, 199], [729, 206], [666, 216], [670, 228], [703, 227], [739, 237], [729, 242], [625, 252], [571, 288], [525, 311], [511, 318], [525, 318], [514, 323], [520, 326], [526, 324],
  [430, 329], [403, 343], [469, 333], [471, 339], [444, 361], [418, 373], [439, 403], [451, 398], [545, 581], [553, 582], [679, 290], [676, 299], [607, 316], [613, 320], [593, 325], [594, 333], [605, 333], [611, 329],
  [541, 350], [549, 351], [536, 354], [534, 360], [551, 358], [541, 364], [533, 382], [642, 379], [637, 384], [634, 391], [639, 397], [646, 398], [653, 395], [570, 428], [579, 428], [563, 433], [581, 437], [580, 444], [573, 448],
  [684, 441], [680, 446], [678, 454], [681, 459], [690, 459], [695, 456], [614, 494], [624, 494], [608, 497], [628, 500], [626, 510], [620, 513], [733, 502], [746, 502], [727, 509], [748, 511], [726, 521], [733, 525],
  [772, 432], [781, 434], [766, 438], [786, 442], [786, 451], [778, 453], [777, 317], [772, 322], [803, 334], [785, 350], [796, 373], [826, 395], [827, 405], [809, 397], [813, 407], [810, 415], [831, 419], [814, 424], [822, 424],
  [584, 628], [593, 628], [720, 771], [727, 769], [762, 802], [771, 800], [933, 905], [881, 505], [919, 550], [949, 579], [999, 622], [986, 632], [1019, 641], [1037, 649], [999, 664], [1030, 680], [1002, 701], [1012, 707],
  [997, 760], [984, 820], [970, 883], [962, 891], [967, 900], [969, 920], [1030, 945], [1025, 957], [1079, 955], [1111, 965], [1074, 988], [1102, 993],
];

/* long carriageways, passed through by a smooth curve */
const curves: P[][] = [
  [[525, 318], [560, 302], [590, 285], [626, 258], [657, 234], [670, 228], [703, 226], [716, 232], [729, 242], [743, 259], [757, 287], [772, 322], [785, 350]],
  [[525, 311], [571, 288], [625, 252], [648, 229], [666, 216], [682, 207], [688, 199]],
  [[729, 206], [739, 237], [759, 273], [777, 317], [787, 329], [803, 334]],
  [[418, 373], [430, 384], [439, 403], [449, 424], [464, 444], [487, 486], [509, 525], [545, 581], [584, 628], [644, 696], [666, 720], [720, 771], [762, 802], [823, 845], [873, 879], [926, 907], [1025, 957], [1052, 969], [1074, 988]],
  [[444, 361], [443, 378], [451, 398], [467, 436], [487, 473], [517, 530], [553, 582], [593, 628], [648, 689], [673, 718], [727, 769], [771, 800], [823, 837], [877, 876], [933, 905], [969, 920], [1030, 945], [1056, 954], [1079, 955]],
  [[831, 419], [842, 445], [881, 505], [919, 550], [949, 579], [978, 600], [999, 622], [1019, 641]],
  [[822, 424], [881, 515], [912, 552], [940, 581], [964, 602], [976, 616], [986, 632], [997, 656], [1001, 680], [1002, 701], [998, 735], [962, 891]],
  [[962, 891], [958, 900], [948, 906], [933, 905]],
  [[1030, 680], [1019, 690], [1012, 707], [997, 760], [984, 820], [970, 883], [967, 900], [966, 912], [969, 920]],
  [[430, 329], [446, 335], [469, 333]], [[444, 361], [454, 347], [471, 339]],
  [[796, 373], [804, 382], [809, 397], [813, 407]], [[825, 361], [825, 380], [827, 405], [831, 419]],
  [[534, 360], [528, 371], [533, 382]], [[541, 364], [537, 371], [539, 378]],
];

/* tangent follows the neighbours' chord, handle length follows the segment */
const smooth = (p: P[]) => {
  const tangent = (i: number): P => {
    const a = p[Math.max(i - 1, 0)], b = p[Math.min(i + 1, p.length - 1)];
    const len = Math.hypot(b[0] - a[0], b[1] - a[1]) || 1;
    return [(b[0] - a[0]) / len, (b[1] - a[1]) / len];
  };
  return p.slice(1).reduce((d, b, i) => {
    const a = p[i], h = Math.hypot(b[0] - a[0], b[1] - a[1]) / 3, s = tangent(i), e = tangent(i + 1);
    return `${d}C${a[0] + s[0] * h} ${a[1] + s[1] * h} ${b[0] - e[0] * h} ${b[1] - e[1] * h} ${b[0]} ${b[1]}`;
  }, `M${p[0][0]} ${p[0][1]}`);
};

const streets =
  "M469 333L511 318M471 339L514 323M520 326L536 354M526 324L541 350M549 351L593 325M551 358L594 333" +
  "M607 316L657 286Q671 278 679 290L772 432M613 320L657 294Q668 287 676 299L766 438M605 333L637 384M611 329L642 379" +
  "M533 382L563 433M539 378L570 428M579 428L634 391M581 437L639 397M573 448L608 497M580 444L614 494M624 494L678 454M628 500L681 459" +
  "M646 398L680 446M653 395L684 441M690 459L727 509M695 456L733 502" +
  "M620 513L667 568Q675 578 685 568L733 525M626 510L669 562Q676 568 683 562L726 521" +
  "M746 502L781 473Q788 467 783 461L778 453M748 511L792 475Q797 469 791 460L786 451M781 434L810 415M786 442L814 424" +
  /* turning lanes inside the junctions */
  "M511 318L525 311M511 318L526 324M514 323L525 318L520 326M511 318L525 318" +
  "M541 350L541 364L536 354L551 358L534 360M541 350L551 358M536 354L541 364" +
  "M593 325L607 316L605 333M593 325L613 329L594 333M607 316L611 329M594 333L613 320" +
  "M642 379V398M637 384L653 395L634 391M642 379L653 395M639 397L642 388" +
  "M570 428L573 448L579 428M563 433Q572 440 581 437M563 433L573 448M570 428L580 444" +
  "M684 441L695 456L678 454M684 441L686 459M680 446L690 459M681 459L686 450L695 456" +
  "M614 494L620 513L624 494M608 497Q618 503 628 500M608 497L620 513M614 494L626 510" +
  "M733 502H746M727 509Q737 514 748 511M733 502Q740 510 733 525M726 521L746 502M733 525L748 511M727 509L726 521" +
  "M772 432L778 453L781 434M766 438Q776 445 786 442M766 438L778 453M772 432L786 451" +
  "M810 415Q820 411 831 419M813 407L822 424M827 405Q825 418 814 424M810 415L814 424";

const MapCanvas = () => (
  <main className="min-w-0 flex-1 border-b border-l border-t border-[#b4b4b4] bg-white">
    <svg width="100%" height="100%" className="block" role="img" aria-label="지도">
      <g transform="translate(-301.500 -160.500)" fill="none" stroke="#222">
        <g strokeWidth="1">
          <circle cx="708.500" cy="207" r="21" /><circle cx="423" cy="351" r="22.500" /><circle cx="805" cy="354" r="20.500" /><circle cx="1020" cy="661" r="20.500" /><circle cx="1090.500" cy="973" r="22.500" />
          {curves.map((c, i) => <path key={i} d={smooth(c)} />)}
          <path d={streets} />
        </g>
        <g fill="#fff200">{nodes.map(([x, y]) => <circle key={`${x}-${y}`} cx={x} cy={y} r="3.800" />)}</g>
        <circle cx="825" cy="361" r="4" fill="#ff7f00" stroke="#ff0000" strokeWidth="3.500" />
        <rect x="806.500" y="345.500" width="37" height="29" stroke="#ff0000" strokeWidth="3" />
      </g>
    </svg>
  </main>
);

/* ---------- status bar ---------- */

const box = "h-[23px] rounded-sm border border-[#adadad] bg-white";

const Spin = ({ id, value, wide }: { id: string; value: string; wide?: boolean }) => (
  <div className={wide ? `flex w-[89px] shrink-0 items-center ${box}` : `flex w-[85px] shrink-0 items-center ${box}`}>
    <input id={id} defaultValue={value} className="h-full min-w-0 flex-1 bg-transparent pl-1" />
    <span className="flex h-full w-[14px] items-center justify-center border-l border-[#c4c4c4] bg-[#f4f4f4]">
      <svg width="7" height="13" aria-hidden="true"><path d="M0 4h7L3.500 0zM0 9h7l-3.500 4z" fill="#555" /></svg>
    </span>
  </div>
);

const StatusBar = () => (
  <footer className="flex h-7 shrink-0 items-center bg-[#efefef] pb-[2px] pl-1 pr-[7px] font-['Liberation_Sans','Noto_Sans_CJK_KR',sans-serif] text-[11px]">
    <label className={`flex w-[356px] shrink-0 items-center gap-2 pl-2 ${box}`}>
      <Icon name="search" size={14} />
      <input aria-label="위치 찾기" placeholder="위치를 찾으려면 입력하세요 (Ctrl+K)" className="min-w-0 flex-1 text-[13px] placeholder:text-[#888]" />
    </label>
    <div className="flex-1" />
    <label htmlFor="coord">좌표</label>
    <input id="coord" defaultValue="1129001,4,1682932,8" className={`ml-1 w-[121px] px-[5px] ${box}`} />
    <button type="button" aria-label="마우스" className="ml-1"><Icon name="mouse" size={17} /></button>
    <label htmlFor="scale" className="ml-3">축척</label>
    <div className="relative ml-[3px] flex items-center">
      <select id="scale" className={`w-[82px] appearance-none pl-[2px] ${box}`}><option>1:17138440</option></select>
      <span className="pointer-events-none absolute right-px flex h-[21px] w-[17px] items-center justify-center border-l border-[#c4c4c4] bg-[#f4f4f4]"><Caret /></span>
    </div>
    <button type="button" aria-label="축척 잠금" className="ml-[10px]"><Icon name="lock" size={16} /></button>
    <label htmlFor="magnifier" className="ml-[8px] mr-[5px]">확대경</label>
    <Spin id="magnifier" value="100%" wide />
    <label htmlFor="rotation" className="ml-[9px] mr-[10px]">회전</label>
    <Spin id="rotation" value="0,0 °" />
    <div className="ml-[7px]"><Tick label="렌더링"><span>렌더링</span></Tick></div>
    <button type="button" className="ml-5 flex items-center gap-1"><Icon name="crs" size={15} />EPSG:4326</button>
    <button type="button" aria-label="메시지" className="ml-[21px]"><Icon name="bubble" size={17} /></button>
  </footer>
);

export default function App() {
  return (
    <div className="flex h-screen flex-col overflow-hidden bg-[#efefef] font-['Noto_Sans','Noto_Sans_CJK_KR',sans-serif] text-[12px] leading-4 text-black">
      <header className="flex h-[23px] shrink-0 items-center bg-white pl-[2px]">
        <Icon name="qgis" size={16} />
        <h1 className="pl-[5px] text-[13px]">*제목 없는 프로젝트 — QGIS</h1>
        <div className="ml-auto flex">
          <button type="button" aria-label="최소화" className="flex w-[46px] justify-center"><svg width="10" height="10"><path d="M0 5.500h10" stroke="#000" /></svg></button>
          <button type="button" aria-label="이전 크기로" className="flex w-[46px] justify-center"><svg width="10" height="10" fill="none" stroke="#000"><path d="M.5 2.500h7v7h-7zM2.500 2.500v-2h7v7h-2" /></svg></button>
          <button type="button" aria-label="닫기" className="flex w-[46px] justify-center"><svg width="10" height="10" stroke="#000"><path d="M0 0l10 10M10 0L0 10" /></svg></button>
        </div>
      </header>
      <nav className="flex h-5 shrink-0 items-center gap-[15px] border-b border-[#d4d4d4] pl-[11px] text-[13px]">
        {menus.map(([text, key]) => <button key={key} type="button" className="whitespace-nowrap">{text} (<u>{key}</u>)</button>)}
      </nav>
      <div className={rowClass}><Strip items={mainTools} /></div>
      <div className={rowClass}><Strip items={editTools} /></div>
      <div className="flex h-[38px] shrink-0 items-center border-b border-[#b6b6b6] bg-linear-to-b from-[#fafafa] to-[#eeeeee]">
        <Strip items={["|", "select", "v"]} />
        <button type="button" aria-label="양식" className="ml-px flex h-[31px] w-8 items-center justify-center rounded-sm border border-[#a0a0a0] bg-white"><Icon name="form" /></button>
        <button type="button" aria-label="옵션" className="mr-px flex h-[31px] w-[11px] items-center justify-center rounded-sm border border-[#a0a0a0] bg-white"><Caret /></button>
        <Strip items={["deselect", "v", "location"]} />
      </div>
      <div className="flex min-h-0 flex-1">
        <div className="flex w-[294px] shrink-0 flex-col">
          <Browser />
          <div className="flex h-[5px] shrink-0 items-center justify-center"><div className="w-4 border-t border-dotted border-[#aaa]" /></div>
          <Layers />
        </div>
        <div className="flex w-[6px] shrink-0 items-center justify-center"><div className="h-4 border-l border-dotted border-[#aaa]" /></div>
        <MapCanvas />
        <Identify />
      </div>
      <StatusBar />
    </div>
  );
}
